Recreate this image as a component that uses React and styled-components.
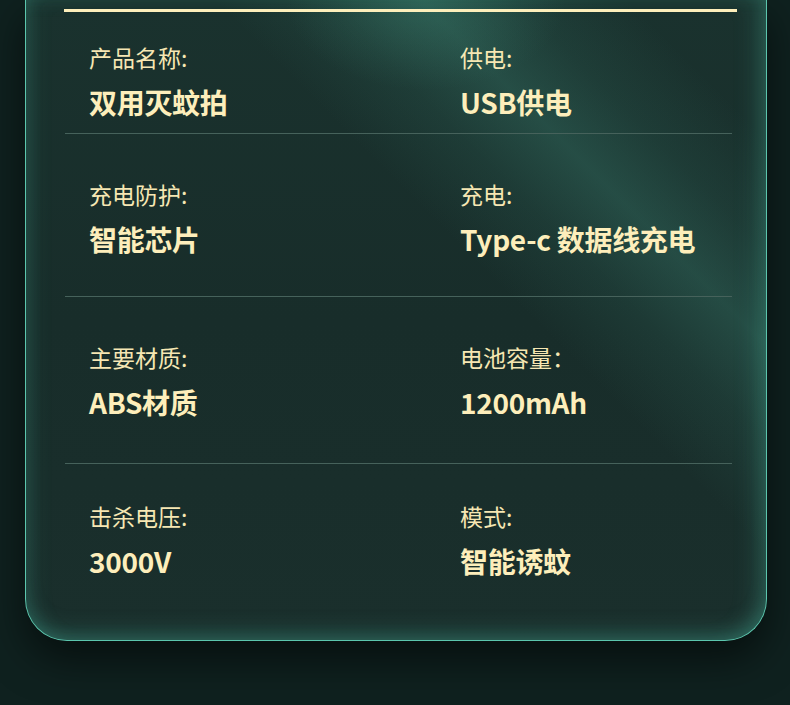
import React from 'react';
import styled, { createGlobalStyle } from 'styled-components';

const specs = [
  {
    pt: 30, pb: 13,
    items: [
      { label: '产品名称:', value: '双用灭蚊拍' },
      { label: '供电:', value: 'USB供电' },
    ],
  },
  {
    pt: 45, pb: 39,
    items: [
      { label: '充电防护:', value: '智能芯片' },
      { label: '充电:', value: 'Type-c 数据线充电' },
    ],
  },
  {
    pt: 45, pb: 43,
    items: [
      { label: '主要材质:', value: 'ABS材质' },
      { label: '电池容量：', value: '1200mAh' },
    ],
  },
  {
    pt: 37, pb: 0,
    items: [
      { label: '击杀电压:', value: '3000V' },
      { label: '模式:', value: '智能诱蚊' },
    ],
  },
];

const App = () => (
  <Page>
    <GlobalStyle />
    <Card>
      <TopLine />
      {specs.map((row, i) => (
        <Row key={i} $pt={row.pt} $pb={row.pb} $last={i === specs.length - 1}>
          {row.items.map(item => (
            <Cell key={item.label}>
              <Label>{item.label}</Label>
              <Value>{item.value}</Value>
            </Cell>
          ))}
        </Row>
      ))}
    </Card>
  </Page>
);

export default App;

const GlobalStyle = createGlobalStyle`
  html, body {
    margin: 0;
    padding: 0;
    background: #0f211f;
  }
  body {
    font-family: "Noto Sans CJK SC", "Noto Sans", sans-serif;
  }
`;

const Page = styled.div`
  width: 790px;
  height: 705px;
  overflow: hidden;
  background: #0f211f;
`;

const Card = styled.div`
  box-sizing: border-box;
  margin-left: 25px;
  width: 742px;
  height: 641px;
  padding-top: 9px;
  border: 1.5px solid #5cc6ae;
  border-top: none;
  border-radius: 0 0 42px 42px;
  background:
    radial-gradient(ellipse 140px 90px at 400px 0px, rgba(60, 130, 112, 0.35), rgba(0, 0, 0, 0)),
    linear-gradient(45deg,
      rgba(0, 0, 0, 0) 60%,
      rgba(60, 135, 118, 0.14) 68%,
      rgba(66, 145, 127, 0.3) 75%,
      rgba(60, 135, 118, 0.14) 82%,
      rgba(0, 0, 0, 0) 90%),
    linear-gradient(180deg, #1a322e 0%, #182d2a 50%, #1a2f2c 100%);
  box-shadow:
    inset 0 -14px 22px -8px rgba(70, 170, 150, 0.35),
    inset 14px 0 22px -10px rgba(70, 170, 150, 0.22),
    inset -16px 0 26px -10px rgba(70, 170, 150, 0.32),
    0 18px 40px rgba(0, 0, 0, 0.55);
`;

const TopLine = styled.div`
  height: 3px;
  margin: 0 29px 0 38px;
  background: #fdefbb;
`;

const Row = styled.div`
  display: grid;
  grid-template-columns: 371px 1fr;
  margin: 0 34px 0 39px;
  padding: ${p => p.$pt}px 0 ${p => p.$pb}px 24px;
  border-bottom: ${p => (p.$last ? 'none' : '1px solid #46625b')};
`;

const Cell = styled.div`
  display: flex;
  flex-direction: column;
  gap: 12px;
`;

const Label = styled.div`
  font-size: 23px;
  line-height: 30px;
  color: #f6e7b3;
  white-space: nowrap;
`;

const Value = styled.div`
  font-size: 28px;
  line-height: 36px;
  font-weight: 600;
  letter-spacing: -0.3px;
  color: #fdeebb;
  white-space: nowrap;
`;
